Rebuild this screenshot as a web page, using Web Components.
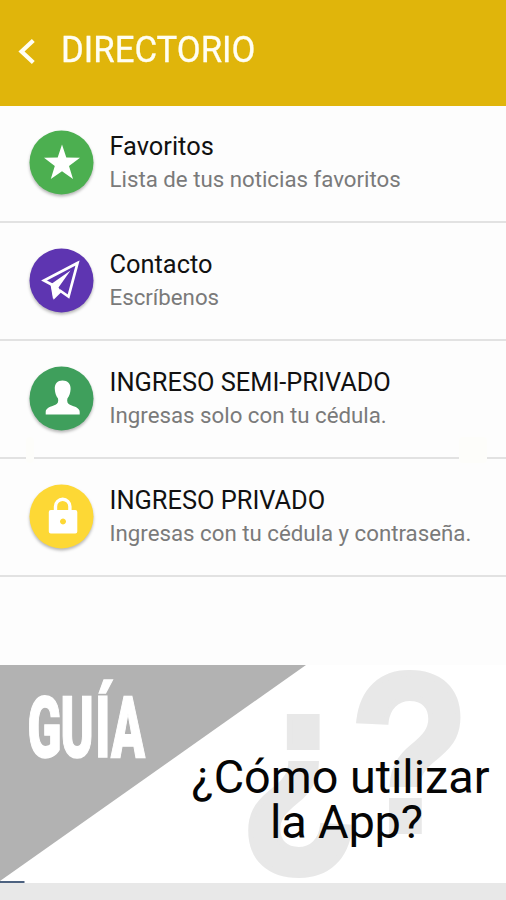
<!DOCTYPE html>
<html lang="es">
<head>
<meta charset="utf-8">
<title>Directorio</title>
<style>
html, body {
    margin: 0;
    height: 100%;
}
body {
    background: #e8e8e8;
    font-family: Roboto, sans-serif;
    overflow: hidden;
}
</style>
</head>
<body>
<directory-page></directory-page>

<script>
const icons = {
    star: '<path fill="#fff" d="M33 14.500 37.300 27.500l13.700.3-11 8.100 4 13-11-7.700-11.200 7.700 4-13-10.800-8.100 13.700-.3z"/>',
    plane: `<path fill="none" stroke="#fff" stroke-width="2.700" d="M48.500 15 15 32.500l8.500 4.500 2 12 6-6 8 5.500z"/>
        <path fill="#fff" d="M41.500 22.500 21.500 36.500 24 51 31.500 42.500 29.500 39.500z"/>`,
    person: '<path fill="#fff" d="M33.500 14.500c-5 0-8 3.200-7.700 8.500.2 4 1.200 7 3.200 9.500.7 3-.2 5.300-2.500 6.300-5 2-9.800 3.200-9.800 7.200V48.500h34v-2.500c0-4-4.800-5.200-9.800-7.200-2.300-1-3.200-3.300-2.500-6.300 2-2.500 3-5.500 3.200-9.500C41.900 17.700 38.500 14.500 33.500 14.500z"/>',
    lock: `<path fill="none" stroke="#fff" stroke-width="3.400" d="M26.500 27v-4.500a7.200 7.200 0 0 1 14.400 0V27"/>
        <path fill="#fff" fill-rule="evenodd" d="M21.800 26h24.500a2 2 0 0 1 2 2v19.500a2 2 0 0 1-2 2h-24.500a2 2 0 0 1-2-2V28a2 2 0 0 1 2-2zm12.200 8.500a3 3 0 1 0 .01 0z"/>`,
};

class DirectoryHeader extends HTMLElement {
    connectedCallback() {
        const shadow = this.attachShadow({mode: 'open'});
        shadow.innerHTML = `
        <style>
        :host {
            display: flex;
            position: relative;
            z-index: 1;
            box-sizing: border-box;
            height: 106px;
            margin-bottom: -1px;
            padding: 28px 0 0 18px;
            background: #e0b50b;
            color: #fffef4;
        }
        svg {
            flex: none;
            margin: 10px 25px 0 0;
        }
        h1 {
            margin: 1px 0 0;
            font-size: 36px;
            line-height: 42px;
            font-weight: 400;
            -webkit-text-stroke: 0.3px;
            transform: scaleX(0.965);
            transform-origin: left;
        }
        </style>
        <svg width="18" height="27" viewBox="0 0 18 27">
            <path d="M15.300 2.500 3.500 13.500l11.800 11" fill="none" stroke="currentColor" stroke-width="4.200"/>
        </svg>
        <h1><slot></slot></h1>`;
    }
}

class DirectoryItem extends HTMLElement {
    connectedCallback() {
        const shadow = this.attachShadow({mode: 'open'});
        shadow.innerHTML = `
        <style>
        :host {
            display: flex;
            box-sizing: border-box;
            height: 118px;
            padding: 25px 0 0 29px;
            border-bottom: 2px solid #e2e2e2;
        }
        .badge {
            flex: none;
            width: 65px;
            height: 65px;
            margin-right: 15.500px;
            filter: drop-shadow(0 2px 1.500px rgba(0, 0, 0, 0.28));
            overflow: visible;
        }
        .texts {
            white-space: nowrap;
        }
        .title {
            font-size: 25.400px;
            line-height: 32px;
            color: #111;
        }
        .note {
            margin-top: 2px;
            font-size: 22.250px;
            line-height: 30px;
            color: #7a7a7a;
        }
        </style>
        <svg class="badge" viewBox="0 0 65 65">
            <circle cx="32.500" cy="32.500" r="32" fill="var(--badge)"/>
            ${icons[this.getAttribute('icon')]}
        </svg>
        <div class="texts">
            <div class="title"><slot></slot></div>
            <div class="note"><slot name="note"></slot></div>
        </div>`;
    }
}

class GuideBanner extends HTMLElement {
    connectedCallback() {
        const shadow = this.attachShadow({mode: 'open'});
        shadow.innerHTML = `
        <style>
        :host {
            display: block;
            height: 218px;
            background: #fff;
        }
        svg {
            display: block;
            overflow: visible;
        }
        </style>
        <svg width="506" height="218" viewBox="0 0 506 218">
            <path d="M0 0H306L0 216z" fill="#b2b2b2"/>
            <g fill="#e8e8e8" stroke="#e8e8e8" stroke-width="6" font-family="Liberation Sans" font-weight="700" font-size="227">
                <text x="240" y="170.500" textLength="119" lengthAdjust="spacingAndGlyphs">¿</text>
                <text x="350" y="165.500" textLength="119" lengthAdjust="spacingAndGlyphs">?</text>
            </g>
            <text transform="translate(27.500 92) scale(0.58 1)" x="0 57 117 144" font-size="86" font-weight="900"
                fill="#fff" stroke="#fff" stroke-width="1.500">GUÍA</text>
            <g font-size="47" fill="#050505">
                <text x="191.500" y="128" textLength="298" lengthAdjust="spacingAndGlyphs">¿Cómo utilizar</text>
                <text x="270" y="172.500" textLength="153">la App?</text>
            </g>
            <path d="M0 216H24.500V218H0z" fill="#4d6280"/>
        </svg>`;
    }
}

class DirectoryPage extends HTMLElement {
    connectedCallback() {
        const shadow = this.attachShadow({mode: 'open'});
        shadow.innerHTML = `
        <style>
        :host {
            display: flex;
            flex-direction: column;
            width: 506px;
            height: 900px;
        }
        main {
            position: relative;
            height: 559.500px;
            background: #fdfdfd;
        }
        .trace {
            position: absolute;
            top: 332px;
            left: 459px;
            width: 28px;
            height: 26px;
            border-radius: 4px;
            background: #fdfdfa;
        }
        .trace.small {
            left: 26px;
            width: 8px;
        }
        </style>
        <directory-header>DIRECTORIO</directory-header>
        <main>
            <directory-item icon="star" style="--badge: #4caf50">Favoritos
                <span slot="note">Lista de tus noticias favoritos</span></directory-item>
            <directory-item icon="plane" style="--badge: #5e35b1">Contacto
                <span slot="note">Escríbenos</span></directory-item>
            <directory-item icon="person" style="--badge: #3f9f5c">INGRESO SEMI-PRIVADO
                <span slot="note">Ingresas solo con tu cédula.</span></directory-item>
            <directory-item icon="lock" style="--badge: #fdd835">INGRESO PRIVADO
                <span slot="note">Ingresas con tu cédula y contraseña.</span></directory-item>
            <div class="trace small"></div>
            <div class="trace"></div>
        </main>
        <guide-banner></guide-banner>`;
    }
}

customElements.define('directory-header', DirectoryHeader);
customElements.define('directory-item', DirectoryItem);
customElements.define('guide-banner', GuideBanner);
customElements.define('directory-page', DirectoryPage);
</script>
</body>
</html>
